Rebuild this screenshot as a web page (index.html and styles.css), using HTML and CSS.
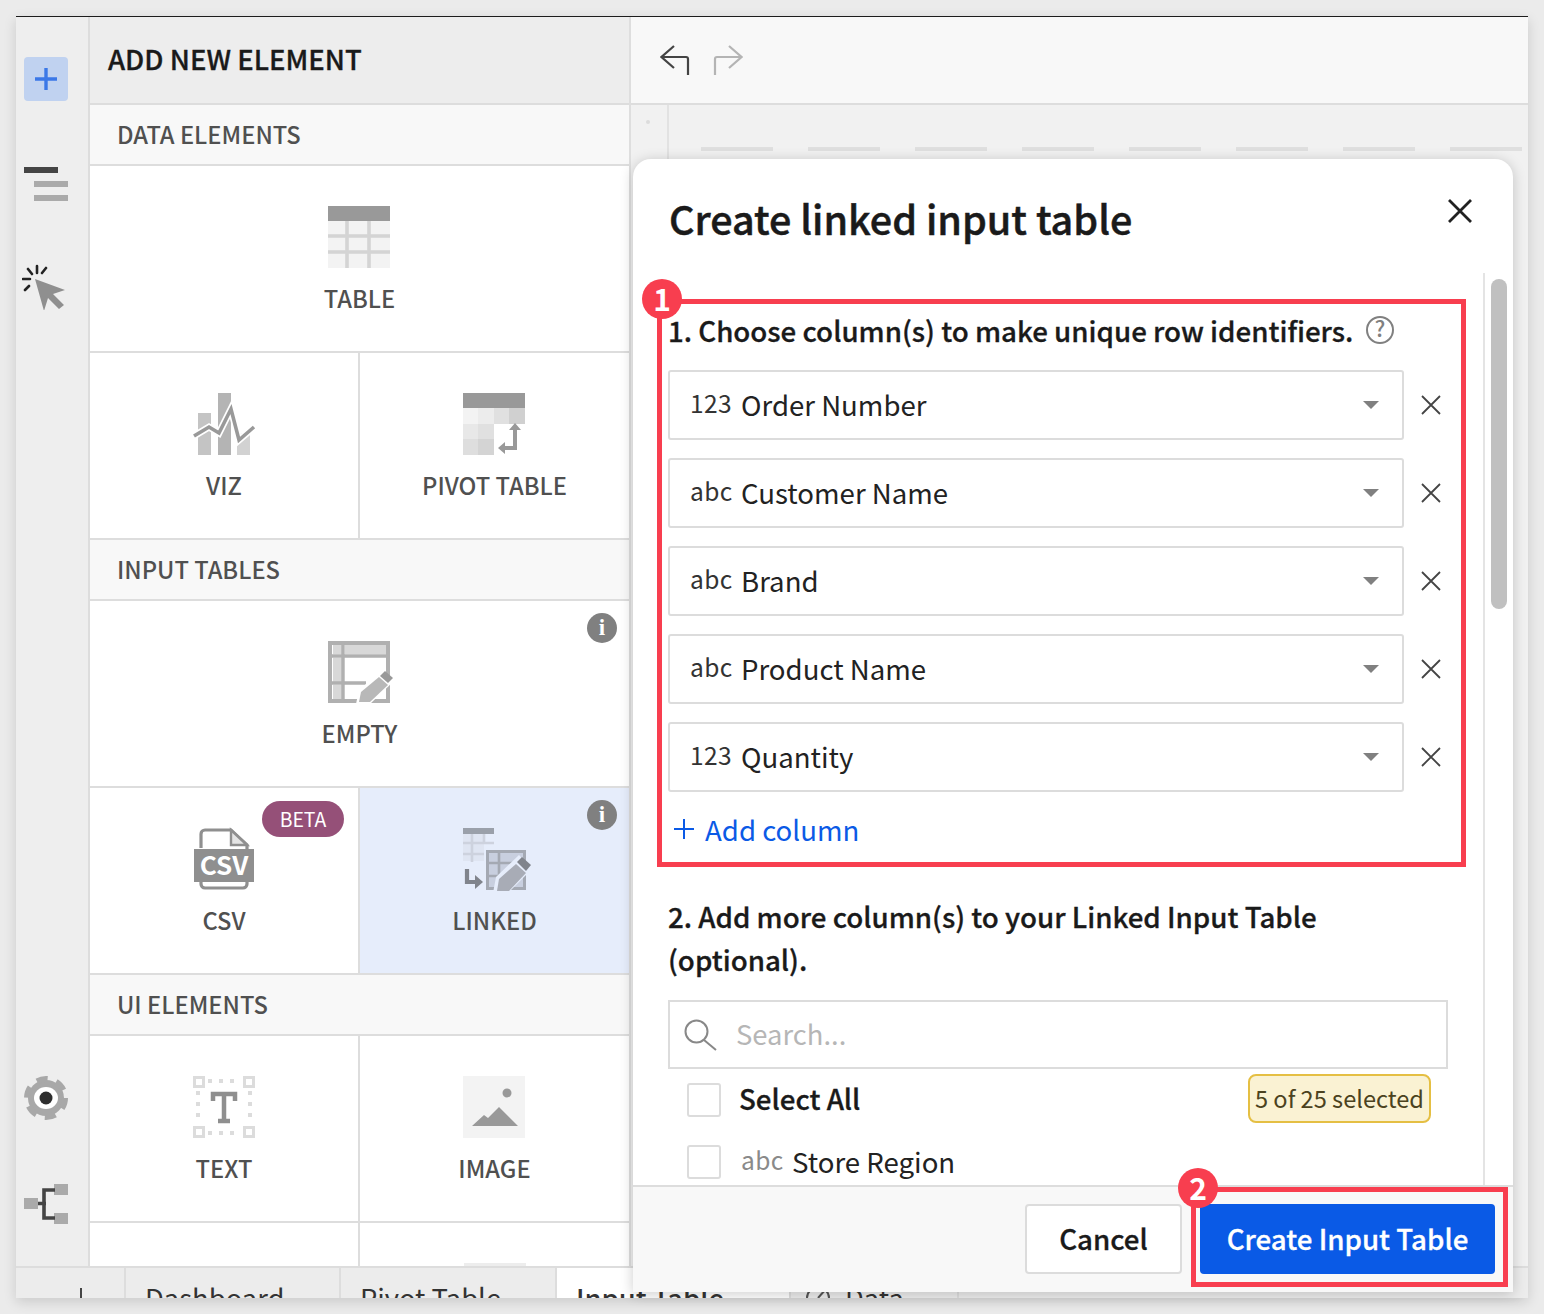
FILE: index.html
```html
<!DOCTYPE html>
<html lang="en">
<head>
<meta charset="utf-8">
<title>Create linked input table</title>
<link rel="stylesheet" href="styles.css">
</head>
<body>
<div class="window">
  <div class="app">
    <nav class="rail">
      <button class="rail-add"><svg width="26" height="26" viewBox="0 0 26 26"><path d="M13 2v22M2 13h22" stroke="#3b78e7" stroke-width="3.4" fill="none"/></svg></button>
      <svg class="rail-outline" width="44" height="34" viewBox="0 0 44 34"><rect x="0" y="0" width="34" height="6" fill="#444"/><rect x="10" y="14" width="34" height="6" fill="#aaa"/><rect x="10" y="28" width="34" height="6" fill="#aaa"/></svg>
      <svg class="rail-cursor" width="46" height="46" viewBox="0 0 46 46"><path d="M13 15l30 11-12 4 11 11-5 4-11-11-4 13z" fill="#8f8f8f"/><path d="M15 2v7M6 5l4 5M24 4l-4 5M1 15h7M3 26l4-4" stroke="#222" stroke-width="2.6" stroke-linecap="round" fill="none"/></svg>
      <div class="rail-bottom">
        <svg width="44" height="44" viewBox="0 0 44 44"><circle cx="22" cy="22" r="18" fill="#a8a8a8"/><circle cx="22" cy="22" r="19" fill="none" stroke="#a8a8a8" stroke-width="6" stroke-dasharray="11 8.900"/><ellipse cx="22" cy="22" rx="12" ry="11" fill="#fff"/><circle cx="22" cy="22" r="6.500" fill="#2e2e2e"/></svg>
        <svg width="44" height="40" viewBox="0 0 44 40"><rect x="0" y="14" width="14" height="11" fill="#aaa"/><rect x="30" y="0" width="14" height="11" fill="#aaa"/><rect x="30" y="29" width="14" height="11" fill="#aaa"/><path d="M14 19.500h8M31 6h-11v28h11" stroke="#444" stroke-width="3.600" fill="none"/></svg>
      </div>
    </nav>

    <aside class="panel">
      <h1 class="panel-title">ADD NEW ELEMENT</h1>
      <h2 class="section">DATA ELEMENTS</h2>
      <div class="grid">
        <div class="cell wide">
          <svg class="icon" width="62" height="62" viewBox="0 0 62 62"><rect width="62" height="62" fill="#f3f3f3"/><rect width="62" height="15" fill="#999"/><path d="M0 30h62M0 46h62M19 15v47M41 15v47" stroke="#d4d4d4" stroke-width="3.600"/></svg>
          <span class="label">TABLE</span>
        </div>
        <div class="cell left">
          <svg class="icon" width="62" height="62" viewBox="0 0 62 62"><rect x="5" y="20" width="13" height="42" fill="#c4c4c4"/><rect x="25" y="0" width="13" height="62" fill="#b4b4b4"/><rect x="44" y="40" width="13" height="22" fill="#d2d2d2"/><path d="M1 43l15-9 10 6 12-24 8 31 15-13" fill="none" stroke="#fff" stroke-width="7"/><path d="M1 43l15-9 10 6 12-24 8 31 15-13" fill="none" stroke="#999" stroke-width="3.600"/></svg>
          <span class="label">VIZ</span>
        </div>
        <div class="cell">
          <svg class="icon" width="62" height="62" viewBox="0 0 62 62"><rect width="62" height="15" fill="#999"/><rect y="15" width="15" height="16" fill="#f3f3f3"/><rect x="15" y="15" width="16" height="16" fill="#ececec"/><rect x="31" y="15" width="15" height="16" fill="#e0e0e0"/><rect x="46" y="15" width="16" height="16" fill="#d0d0d0"/><rect y="31" width="15" height="15" fill="#e8e8e8"/><rect x="15" y="31" width="16" height="15" fill="#e0e0e0"/><rect y="46" width="15" height="16" fill="#dedede"/><rect x="15" y="46" width="16" height="16" fill="#d4d4d4"/><path d="M52 36v19H41" fill="none" stroke="#999" stroke-width="4"/><path d="M46 37l6-7 6 7zM42 49l-7 6 7 6z" fill="#999"/></svg>
          <span class="label">PIVOT TABLE</span>
        </div>
      </div>

      <h2 class="section">INPUT TABLES</h2>
      <div class="grid">
        <div class="cell wide">
          <svg class="icon" width="62" height="62" viewBox="0 0 62 62"><rect x="2" y="2" width="58" height="58" fill="#fff" stroke="#b0b0b0" stroke-width="4"/><rect x="5" y="4" width="9" height="9" fill="#d8d8d8"/><rect x="17" y="4" width="41" height="9" fill="#d8d8d8"/><rect x="5" y="17" width="9" height="24" fill="#d8d8d8"/><rect x="5" y="44" width="9" height="14" fill="#d8d8d8"/><path d="M15 2v58M2 15h56M2 42h36" stroke="#b0b0b0" stroke-width="3.400"/><path d="M28 63l3-14 23-20 12 11-24 23z" fill="#fff"/><path d="M31 61l2-10 18-15 9 8-18 17z" fill="#b8b8b8"/><path d="M52 35l5-5 8 7-5 5z" fill="#999"/></svg>
          <span class="label">EMPTY</span>
          <span class="info">i</span>
        </div>
        <div class="cell left">
          <svg class="icon" width="62" height="62" viewBox="0 0 62 62"><path d="M8 20V6a4 4 0 0 1 4-4h26l16 15v4M8 54v2a4 4 0 0 0 4 4h38a4 4 0 0 0 4-4v-2" fill="none" stroke="#8f8f8f" stroke-width="3.200"/><path d="M38 2v15h16z" fill="#e4e4e4" stroke="#8f8f8f" stroke-width="2.400"/><rect x="1" y="21" width="60" height="33" fill="#8f8f8f"/><text class="csv-mark" x="31" y="47" text-anchor="middle">CSV</text></svg>
          <span class="label">CSV</span>
          <span class="beta">BETA</span>
        </div>
        <div class="cell active">
          <svg class="icon" width="62" height="62" viewBox="0 0 62 62"><rect x="0" y="0" width="31" height="6" fill="#9aa0aa"/><rect x="0" y="6" width="21" height="27" fill="#dfe5f2"/><path d="M0 15h31M0 26h21M9 6v28M21 6v9" stroke="#cdd2de" stroke-width="2.600"/><path d="M4 41v13h9" fill="none" stroke="#80848c" stroke-width="4.200"/><path d="M12 47l8 7-8 7z" fill="#80848c"/><rect x="24.500" y="23.500" width="37" height="37" fill="#c8cfdf" stroke="#a4a9b3" stroke-width="3"/><path d="M36 23v37M25 35h36M25 48h24" stroke="#a4a9b3" stroke-width="2.600"/><path d="M30 65l3-16 23-22 13 14-24 24z" fill="#e6edfb"/><path d="M34 63l2-12 17-15 10 9-17 18z" fill="#a8acb6"/><path d="M54 34l5-5 9 8-5 6z" fill="#80848c"/></svg>
          <span class="label">LINKED</span>
          <span class="info">i</span>
        </div>
      </div>

      <h2 class="section">UI ELEMENTS</h2>
      <div class="grid">
        <div class="cell left">
          <svg class="icon" width="62" height="62" viewBox="0 0 62 62"><path d="M15 5h32M15 57h32M5 15v32M57 15v32" stroke="#dcdcdc" stroke-width="4" stroke-dasharray="4 7" fill="none"/><path d="M1.500 1.500h9v9h-9zM51.500 1.500h9v9h-9zM1.500 51.500h9v9h-9zM51.500 51.500h9v9h-9z" fill="none" stroke="#dcdcdc" stroke-width="3"/><path d="M20 25v-7h22v7M31 18v27M25 45h12" fill="none" stroke="#8f8f8f" stroke-width="4.500"/></svg>
          <span class="label">TEXT</span>
        </div>
        <div class="cell">
          <svg class="icon" width="62" height="62" viewBox="0 0 62 62"><rect width="62" height="62" fill="#f3f3f3"/><circle cx="44" cy="17" r="4.500" fill="#999"/><path d="M9 50l12-11 4 3 11-11 19 19z" fill="#999"/></svg>
          <span class="label">IMAGE</span>
        </div>
        <div class="cell left stub"></div>
        <div class="cell stub"><span class="stub-mark"></span></div>
      </div>
    </aside>

    <main class="main">
      <header class="toolbar">
        <svg width="30" height="30" viewBox="0 0 30 30"><path d="M28 30V14a2 2 0 0 0-2-2H2M14 1L1.500 12 14 23" fill="none" stroke="#444" stroke-width="2.200"/></svg>
        <svg width="30" height="30" viewBox="0 0 30 30"><path d="M2 30V14a2 2 0 0 1 2-2h24M16 1l12.500 11L16 23" fill="none" stroke="#b4b4b4" stroke-width="2.200"/></svg>
      </header>
      <div class="canvas">
        <div class="gutter"><span class="gutter-dot"></span></div>
        <div class="canvas-sheet"><div class="ruler"></div></div>
      </div>
    </main>
  </div>

  <footer class="tabs">
    <div class="tab tab-plus"><span class="plus-mark"></span></div>
    <div class="tab">Dashboard</div>
    <div class="tab">Pivot Table</div>
    <div class="tab current">Input Table</div>
    <div class="tab tab-data"><svg width="26" height="26" viewBox="0 0 26 26"><circle cx="13" cy="13" r="11" fill="none" stroke="#555" stroke-width="2"/><path d="M13 13l8-9" stroke="#555" stroke-width="2"/></svg>Data</div>
  </footer>

  <section class="modal">
    <div class="modal-head">
      <h2 class="modal-title">Create linked input table</h2>
      <svg class="modal-close" width="24" height="24" viewBox="0 0 24 24"><path d="M1 1l22 22M23 1L1 23" stroke="#222" stroke-width="2.800" fill="none"/></svg>
    </div>
    <div class="modal-body">
      <div class="modal-scroll">
        <div class="step-one">
          <p class="step-title">1. Choose column(s) to make unique row identifiers. <svg class="help" width="30" height="30" viewBox="0 0 30 30"><circle cx="15" cy="15" r="13" fill="none" stroke="#808080" stroke-width="2"/><text class="help-mark" x="15" y="22" text-anchor="middle">?</text></svg></p>
          <div class="col-row"><div class="select"><span class="type">123</span><span class="col-name">Order Number</span><span class="caret"></span></div><svg class="remove" width="20" height="20" viewBox="0 0 20 20"><path d="M1 1l18 18M19 1L1 19" stroke="#444" stroke-width="1.800"/></svg></div>
          <div class="col-row"><div class="select"><span class="type">abc</span><span class="col-name">Customer Name</span><span class="caret"></span></div><svg class="remove" width="20" height="20" viewBox="0 0 20 20"><path d="M1 1l18 18M19 1L1 19" stroke="#444" stroke-width="1.800"/></svg></div>
          <div class="col-row"><div class="select"><span class="type">abc</span><span class="col-name">Brand</span><span class="caret"></span></div><svg class="remove" width="20" height="20" viewBox="0 0 20 20"><path d="M1 1l18 18M19 1L1 19" stroke="#444" stroke-width="1.800"/></svg></div>
          <div class="col-row"><div class="select"><span class="type">abc</span><span class="col-name">Product Name</span><span class="caret"></span></div><svg class="remove" width="20" height="20" viewBox="0 0 20 20"><path d="M1 1l18 18M19 1L1 19" stroke="#444" stroke-width="1.800"/></svg></div>
          <div class="col-row"><div class="select"><span class="type">123</span><span class="col-name">Quantity</span><span class="caret"></span></div><svg class="remove" width="20" height="20" viewBox="0 0 20 20"><path d="M1 1l18 18M19 1L1 19" stroke="#444" stroke-width="1.800"/></svg></div>
          <div class="add-col"><svg width="20" height="20" viewBox="0 0 20 20"><path d="M10 0v20M0 10h20" stroke="#0b5ae6" stroke-width="2"/></svg>Add column</div>
        </div>
        <p class="step-two">2. Add more column(s) to your Linked Input Table<br>(optional).</p>
        <div class="search"><svg width="34" height="32" viewBox="0 0 34 32"><circle cx="12.500" cy="12.500" r="11" fill="none" stroke="#888" stroke-width="2"/><path d="M20 21l12 10" stroke="#888" stroke-width="2"/></svg><span class="placeholder">Search...</span></div>
        <div class="check-row"><span class="check"></span><span class="select-all">Select All</span><span class="count">5 of 25 selected</span></div>
        <div class="check-row store"><span class="check"></span><span class="type muted">abc</span><span class="col-name">Store Region</span></div>
      </div>
      <div class="scrollbar"><span class="thumb"></span></div>
    </div>
    <div class="modal-foot">
      <button class="btn btn-cancel">Cancel</button>
      <button class="btn btn-primary">Create Input Table</button>
    </div>
  </section>

  <div class="mark mark-one"><span class="badge badge-one">1</span></div>
  <div class="mark mark-two"><span class="badge badge-two">2</span></div>
</div>
</body>
</html>
```
FILE: styles.css
```css
* { box-sizing: border-box; }
html, body { margin: 0; height: 100%; }
body {
  background: #ebebeb;
  padding: 16px;
  font-family: "Noto Sans CJK SC", "Source Sans Pro", "Noto Sans", sans-serif;
  color: #1a1a1a;
  overflow: hidden;
}
h1, h2, p { margin: 0; font-weight: 500; }
button { font: inherit; }

.window {
  position: relative;
  width: 1512px;
  height: 1282px;
  border-top: 1px solid #1c1c1c;
  display: flex;
  flex-direction: column;
  box-shadow: 0 4px 12px rgba(0,0,0,.14);
  background: #f0f0f0;
}
.app { flex: 1; min-height: 0; display: flex; }

.rail {
  width: 74px;
  flex: none;
  background: #eeeeee;
  border-right: 2px solid #dddddd;
  display: flex;
  flex-direction: column;
  padding: 40px 0 42px 8px;
}
.rail-add {
  width: 44px; height: 44px;
  background: #c0d2f0;
  border: 0; border-radius: 4px; padding: 0;
  display: flex; align-items: center; justify-content: center;
}
.rail-outline { margin-top: 66px; }
.rail-cursor { margin-top: 63px; margin-left: -2px; }
.rail-bottom { margin-top: auto; display: flex; flex-direction: column; gap: 64px; }

.panel {
  width: 541px;
  flex: none;
  background: #f8f8f8;
  border-right: 2px solid #dedede;
  overflow: hidden;
}
.panel-title {
  height: 88px;
  background: #ededed;
  border-bottom: 2px solid #dddddd;
  padding-left: 18px;
  font-size: 27.500px;
  line-height: 82px;
  color: #1a1a1a;
  -webkit-text-stroke: .3px #1a1a1a;
}
.section {
  height: 61px;
  border-bottom: 2px solid #dddddd;
  padding-left: 27px;
  font-size: 23.700px;
  line-height: 58px;
  color: #505050;
}
.grid { display: grid; grid-template-columns: 270px 269px; }
.cell {
  position: relative;
  height: 187px;
  background: #fff;
  border-bottom: 2px solid #dddddd;
  display: flex;
  flex-direction: column;
  align-items: center;
  padding-top: 40px;
}
.cell.wide { grid-column: span 2; }
.cell.left { border-right: 2px solid #dddddd; }
.cell.active { background: #e6edfb; }
.cell.stub { height: 60px; border-bottom: 0; }
.icon { display: block; flex: none; margin-right: 1px; overflow: visible; }
.label {
  margin-top: 13px;
  font-size: 23.700px;
  line-height: 34px;
  font-weight: 500;
  color: #505050;
}
.info {
  position: absolute;
  right: 12px; top: 12px;
  width: 30px; height: 30px;
  border-radius: 50%;
  background: #808080;
  color: #fff;
  font: 700 23px/30px "Liberation Serif", serif;
  text-align: center;
}
.beta {
  position: absolute;
  left: 172px; top: 13px;
  width: 82px; height: 36px;
  border-radius: 18px;
  background: #955078;
  color: #fff;
  font-size: 19.400px;
  line-height: 35px;
  text-align: center;
}
.csv-mark { font: 700 26px "Noto Sans CJK SC", sans-serif; fill: #fff; }
.stub-mark {
  display: block;
  width: 62px; height: 4px;
  background: #ededed;
}

.main { flex: 1; min-width: 0; display: flex; flex-direction: column; }
.toolbar {
  height: 88px;
  background: #f8f8f8;
  border-bottom: 2px solid #dddddd;
  display: flex;
  align-items: center;
  gap: 23px;
  padding: 0 0 0 29px;
}
.canvas { flex: 1; min-height: 0; display: flex; background: #f1f1f1; }
.gutter {
  width: 38px;
  flex: none;
  border-right: 2px solid #e2e2e2;
  padding: 15px 0 0 15px;
}
.gutter-dot { display: block; width: 4px; height: 4px; border-radius: 50%; background: #dcdcdc; }
.canvas-sheet { flex: 1; padding: 42px 0 0 32px; }
.ruler {
  height: 4px;
  background: repeating-linear-gradient(90deg, #dfdfdf 0 72px, transparent 72px 107px);
}

.tabs {
  height: 32px;
  flex: none;
  background: #ececec;
  border-top: 2px solid #dddddd;
  display: flex;
  overflow: hidden;
  font-size: 27.400px;
  line-height: 36px;
  color: #333;
}
.tab {
  height: 60px;
  padding: 11px 19px 0 19px;
  border-right: 2px solid #dddddd;
  white-space: nowrap;
  flex: none;
}
.tab-plus { width: 110px; padding: 0; position: relative; }
.plus-mark { position: absolute; left: 64px; top: 20px; width: 2px; height: 10px; background: #444; }
.tab:nth-child(2) { width: 215px; }
.tab:nth-child(3) { width: 216px; }
.tab.current { background: #fff; width: 234px; font-weight: 500; }
.tab-data { display: flex; gap: 14px; padding-left: 14px; width: 168px; }
.tab-data svg { margin-top: 6px; }

.modal {
  position: absolute;
  left: 617px; top: 142px;
  width: 880px; height: 1133px;
  background: #fff;
  border-radius: 18px 18px 0 0;
  box-shadow: 0 2px 14px rgba(0,0,0,.2);
  display: flex;
  flex-direction: column;
  overflow: hidden;
}
.modal-head {
  height: 114px;
  flex: none;
  display: flex;
  justify-content: space-between;
  padding: 32px 41px 0 36px;
}
.modal-title {
  font-size: 39.500px;
  line-height: 54px;
  font-weight: 500;
  color: #1a1a1a;
  -webkit-text-stroke: .5px #1a1a1a;
}
.modal-close { margin-top: 8px; }
.modal-body { flex: 1; min-height: 0; display: flex; }
.modal-scroll {
  flex: 1;
  min-width: 0;
  overflow: hidden;
  padding: 37px 36px 0 35px;
  border-right: 2px solid #e4e4e4;
}
.scrollbar { width: 28px; flex: none; padding: 6px 6px 0 6px; background: #fff; }
.thumb { display: block; width: 16px; height: 330px; border-radius: 8px; background: #c0c0c0; }

.step-title {
  font-size: 27.700px;
  line-height: 40px;
  font-weight: 500;
  display: flex;
  align-items: center;
  gap: 12px;
  white-space: nowrap;
  margin-bottom: 20px;
  -webkit-text-stroke: .3px #1a1a1a;
}
.help { -webkit-text-stroke: 0; }
.help-mark { font-size: 22px; fill: #808080; }
.col-row { display: flex; align-items: center; gap: 17px; margin-bottom: 18px; width: 783px; }
.select {
  width: 736px; height: 70px;
  flex: none;
  border: 2px solid #dcdcdc;
  border-radius: 3px;
  display: flex;
  align-items: center;
  padding: 0 23px 0 20px;
  background: #fff;
}
.type { font-size: 24.500px; line-height: 34px; letter-spacing: .4px; color: #333; margin-right: 10px; width: 41px; flex: none; position: relative; top: -2px; }
.type.muted { color: #8a8a8a; }
.col-name { font-size: 27.600px; line-height: 36px; color: #222; position: relative; top: -1px; }
.caret {
  margin-left: auto;
  width: 0; height: 0;
  border-left: 8px solid transparent;
  border-right: 8px solid transparent;
  border-top: 8px solid #808080;
}
.add-col {
  display: flex; align-items: center; gap: 11px;
  margin-top: -4px;
  padding-left: 6px;
  font-size: 27.600px; line-height: 46px;
  color: #0b5ae6;
}
.step-two { margin-top: 43px; font-size: 27.700px; line-height: 43px; font-weight: 500; -webkit-text-stroke: .3px #1a1a1a; }
.search {
  margin-top: 19px;
  width: 780px; height: 69px;
  border: 2px solid #dcdcdc;
  display: flex; align-items: center; gap: 18px;
  padding-left: 14px;
}
.placeholder { font-size: 27.400px; color: #b6b6b6; position: relative; top: -2px; }
.check-row { display: flex; align-items: center; width: 744px; margin-left: 19px; height: 62px; }
.check { width: 34px; height: 34px; border: 2px solid #dcdcdc; border-radius: 3px; flex: none; margin-right: 18px; }
.select-all { font-size: 27.700px; font-weight: 500; -webkit-text-stroke: .3px #1a1a1a; position: relative; top: -2px; }
.count {
  margin-left: auto;
  height: 49px;
  padding: 0 5px;
  border: 2px solid #e5bf43;
  border-radius: 8px;
  background: #faf2d3;
  font-size: 23.600px;
  line-height: 44px;
  color: #4b4220;
  position: relative;
  top: -2px;
}
.store { margin-top: 0; }
.store .check { margin-right: 20px; }
.store .type { margin-right: 10px; }

.modal-foot {
  height: 107px;
  flex: none;
  background: #f8f8f8;
  border-top: 2px solid #dddddd;
  display: flex;
  justify-content: flex-end;
  align-items: flex-start;
  gap: 18px;
  padding: 17px 18px 0 0;
}
.btn { height: 70px; border-radius: 4px; font-size: 27.700px; font-weight: 500; padding: 0 0 3px; }
.btn-cancel { width: 157px; background: #fff; border: 2px solid #dcdcdc; color: #1a1a1a; -webkit-text-stroke: .3px #1a1a1a; }
.btn-primary { width: 295px; background: #0a5ae6; border: 0; color: #fff; -webkit-text-stroke: .3px #fff; }

.mark { position: absolute; border: 5px solid #f83e4f; pointer-events: none; }
.mark-one { left: 641px; top: 282px; width: 809px; height: 568px; }
.mark-two { left: 1175px; top: 1170px; width: 317px; height: 100px; }
.badge {
  position: absolute;
  width: 40px; height: 40px;
  border-radius: 50%;
  background: #f83e4f;
  color: #fff;
  font-size: 30px;
  font-weight: 700;
  line-height: 38px;
  text-align: center;
}
.badge-one { left: -20px; top: -25px; }
.badge-two { left: -18px; top: -24px; }
```
